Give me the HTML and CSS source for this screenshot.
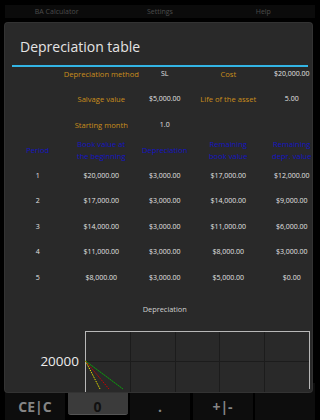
FILE: index.html
```html
<!DOCTYPE html>
<html>
<head>
<meta charset="utf-8">
<link rel="stylesheet" href="styles.css">
</head>
<body>
<div class="screen">
  <div class="menubar"><span>BA Calculator</span><span>Settings</span><span>Help</span></div>
  <div class="calc-body"></div>
  <div class="keys">
    <div class="key"><span class="klabel">CLR WORK</span><span class="kval">CE|C</span></div>
    <div class="key active"><div class="face"><span class="klabel">MEM</span><span class="kval dark">0</span></div></div>
    <div class="key"><span class="klabel">FORMAT</span><span class="kval">.</span></div>
    <div class="key"><span class="klabel">RESET</span><span class="kval">+|-</span></div>
    <div class="key"></div>
  </div>

  <div class="dialog">
    <div class="dlg-title">Depreciation table</div>
    <div class="rule"></div>
    <div class="table">
      <div class="cell"></div>
      <div class="cell lbl">Depreciation method</div>
      <div class="cell">SL</div>
      <div class="cell lbl">Cost</div>
      <div class="cell">$20,000.00</div>

      <div class="cell"></div>
      <div class="cell lbl">Salvage value</div>
      <div class="cell">$5,000.00</div>
      <div class="cell lbl">Life of the asset</div>
      <div class="cell">5.00</div>

      <div class="cell"></div>
      <div class="cell lbl">Starting month</div>
      <div class="cell">1.0</div>
      <div class="cell"></div>
      <div class="cell"></div>

      <div class="cell hd">Period</div>
      <div class="cell hd">Book value at<br>the beginning</div>
      <div class="cell hd">Depreciation</div>
      <div class="cell hd">Remaining<br>book value</div>
      <div class="cell hd">Remaining<br>depr. value</div>

      <div class="cell">1</div><div class="cell">$20,000.00</div><div class="cell">$3,000.00</div><div class="cell">$17,000.00</div><div class="cell">$12,000.00</div>
      <div class="cell">2</div><div class="cell">$17,000.00</div><div class="cell">$3,000.00</div><div class="cell">$14,000.00</div><div class="cell">$9,000.00</div>
      <div class="cell">3</div><div class="cell">$14,000.00</div><div class="cell">$3,000.00</div><div class="cell">$11,000.00</div><div class="cell">$6,000.00</div>
      <div class="cell">4</div><div class="cell">$11,000.00</div><div class="cell">$3,000.00</div><div class="cell">$8,000.00</div><div class="cell">$3,000.00</div>
      <div class="cell">5</div><div class="cell">$8,000.00</div><div class="cell">$3,000.00</div><div class="cell">$5,000.00</div><div class="cell">$0.00</div>
    </div>
    <div class="chart-title">Depreciation</div>
    <div class="chart">
      <div class="ylabel">20000</div>
      <svg class="plot" width="233" height="74" viewBox="0 0 233 74">
        <g stroke="#1c1c1c" stroke-width="1">
          <line x1="51.5" y1="13" x2="51.5" y2="74"/>
          <line x1="96.5" y1="13" x2="96.5" y2="74"/>
          <line x1="140.5" y1="13" x2="140.5" y2="74"/>
          <line x1="185.5" y1="13" x2="185.5" y2="74"/>
          <line x1="6" y1="43.5" x2="230" y2="43.5"/>
        </g>
        <g stroke="#b8b8b8" stroke-width="1" fill="none">
          <line x1="6.5" y1="13" x2="6.5" y2="74"/>
          <line x1="6" y1="13.5" x2="230" y2="13.5"/>
          <line x1="230.5" y1="13" x2="230.5" y2="71"/>
        </g>
        <g stroke-width="1" stroke-dasharray="1.5 1">
          <line x1="6.5" y1="43" x2="21" y2="71" stroke="#e6e000"/>
          <line x1="6.5" y1="43" x2="30" y2="71" stroke="#d00000"/>
          <line x1="6.5" y1="43" x2="44" y2="71" stroke="#00c800"/>
        </g>
      </svg>
    </div>
  </div>
</div>
</body>
</html>
```
FILE: styles.css
```css
html, body {
  margin: 0;
  padding: 0;
  background: #000;
}
.screen {
  position: relative;
  width: 320px;
  height: 420px;
  overflow: hidden;
  display: flex;
  flex-direction: column;
  font-family: "Open Sans", "DejaVu Sans", sans-serif;
}
.menubar {
  margin: 5px 5px 0;
  height: 13px;
  background: #0b0b0b;
  display: grid;
  grid-template-columns: repeat(3, 1fr);
  align-items: center;
  text-align: center;
  font-size: 7px;
  line-height: 13px;
  color: #4c4c4c;
}
.calc-body {
  flex: 1;
}
.keys {
  height: 37px;
  display: grid;
  grid-template-columns: repeat(5, 60px);
  column-gap: 2.5px;
  padding-left: 5px;
}
.key {
  background: #0d0d0d;
  display: flex;
  flex-direction: column;
  align-items: center;
  padding-top: 3px;
  box-sizing: border-box;
}
.key.active {
  background: #000;
  padding-top: 0;
}
.face {
  width: 100%;
  height: 32px;
  padding-top: 3px;
  box-sizing: border-box;
  background: #3b3b3b;
  border-radius: 0 0 3px 3px;
  border-bottom: 1px solid #555;
  display: flex;
  flex-direction: column;
  align-items: center;
}
.klabel {
  font-size: 7px;
  line-height: 10px;
  color: #7a2810;
  font-weight: bold;
}
.kval {
  margin-top: 3px;
  font-size: 14px;
  line-height: 16px;
  font-weight: bold;
  color: #858585;
}
.kval.dark {
  color: #111;
}

.dialog {
  position: absolute;
  left: 5px;
  top: 23px;
  width: 307px;
  height: 369px;
  background: #292929;
  border-radius: 3px;
  box-shadow: 0 0 0 1px #333;
  overflow: hidden;
}
.dlg-title {
  height: 42px;
  box-sizing: border-box;
  padding: 5px 0 0 15px;
  line-height: 37px;
  font-size: 14px;
  color: #e4e4e4;
}
.rule {
  height: 2px;
  background: #33b5e5;
  margin: 0 4px 0 7px;
}
.table {
  display: grid;
  grid-template-columns: repeat(5, 63.5px);
  grid-auto-rows: 25.5px;
  margin: -6px 0 0 1px;
}
.cell {
  display: flex;
  align-items: center;
  justify-content: center;
  text-align: center;
  white-space: nowrap;
  font-size: 7px;
  line-height: 10px;
  color: #e2e2e2;
}
.cell.lbl {
  color: #c98e1c;
  font-size: 7.6px;
}
.cell.hd {
  color: #1414c4;
  font-size: 7.6px;
  line-height: 12px;
}
.chart-title {
  margin: 13.5px 0 0 1px;
  width: 317.5px;
  text-align: center;
  font-size: 7.4px;
  line-height: 10px;
  color: #d0d0d0;
}
.chart {
  margin-top: 4px;
  display: flex;
}
.ylabel {
  width: 74px;
  text-align: right;
  font-size: 13.5px;
  line-height: 16px;
  padding-top: 35px;
  color: #ececec;
}
.plot {
  display: block;
  flex: none;
}
```
